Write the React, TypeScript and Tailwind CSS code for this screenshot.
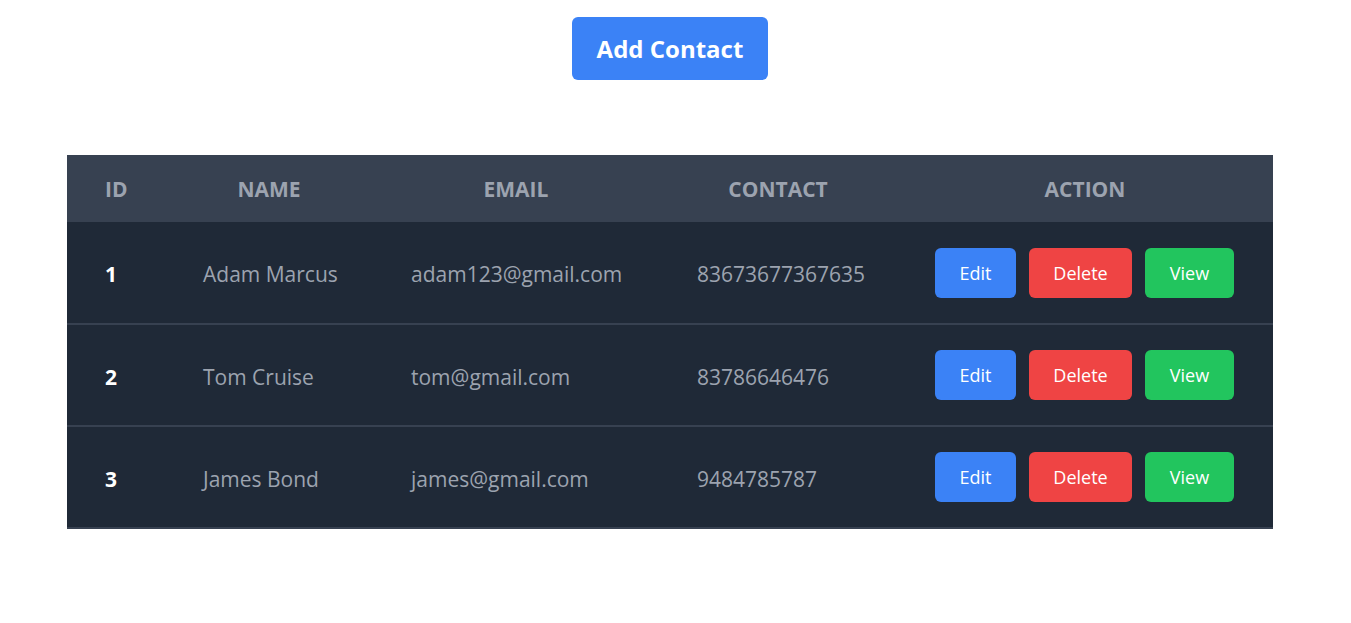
import React from 'react';

const contacts = [
  { id: 1, name: 'Adam Marcus', email: 'adam123@gmail.com', contact: '83673677367635' },
  { id: 2, name: 'Tom Cruise', email: 'tom@gmail.com', contact: '83786646476' },
  { id: 3, name: 'James Bond', email: 'james@gmail.com', contact: '9484785787' },
];

export default function App() {
  return (
    <div className="w-[1340px] min-h-[623px] bg-white" style={{ fontFamily: '"Open Sans", "Noto Sans", sans-serif' }}>
      <div className="flex justify-center pt-[17px]">
        <button className="w-[196px] h-[63px] rounded-md bg-[#3b82f6] text-white text-2xl font-bold">
          Add Contact
        </button>
      </div>

      <table className="w-[90%] mx-auto mt-[75px] table-fixed border-collapse">
        <colgroup>
          <col className="w-[98px]" />
          <col className="w-[208px]" />
          <col className="w-[286px]" />
          <col className="w-[238px]" />
          <col />
        </colgroup>
        <thead>
          <tr className="bg-[#374151] h-[67px] text-[21px] font-bold uppercase text-[#9ca3af]">
            <th className="px-[38px] pt-[3px] text-center">ID</th>
            <th className="px-[38px] pt-[3px] text-center">Name</th>
            <th className="px-[38px] pt-[3px] text-center">Email</th>
            <th className="px-[38px] pt-[3px] text-center">Contact</th>
            <th className="px-[38px] pt-[3px] text-center">Action</th>
          </tr>
        </thead>
        <tbody>
          {contacts.map((c) => (
            <tr key={c.id} className="bg-[#1f2937] h-[102px] border-b-2 border-[#374151] text-[21px] text-[#9ca3af]">
              <td className="px-[38px] pt-[5px] text-left font-bold text-white">{c.id}</td>
              <td className="px-[38px] pt-[5px] text-left whitespace-nowrap">{c.name}</td>
              <td className="px-[38px] pt-[5px] text-left whitespace-nowrap">{c.email}</td>
              <td className="px-[38px] pt-[5px] text-left whitespace-nowrap">{c.contact}</td>
              <td className="px-[38px] text-left">
                <div className="flex gap-[13px]">
                  <button className="w-[81px] h-[50px] rounded-md bg-[#3b82f6] text-white text-lg">Edit</button>
                  <button className="w-[103px] h-[50px] rounded-md bg-[#ef4444] text-white text-lg">Delete</button>
                  <button className="w-[89px] h-[50px] rounded-md bg-[#22c55e] text-white text-lg">View</button>
                </div>
              </td>
            </tr>
          ))}
        </tbody>
      </table>
    </div>
  );
}
